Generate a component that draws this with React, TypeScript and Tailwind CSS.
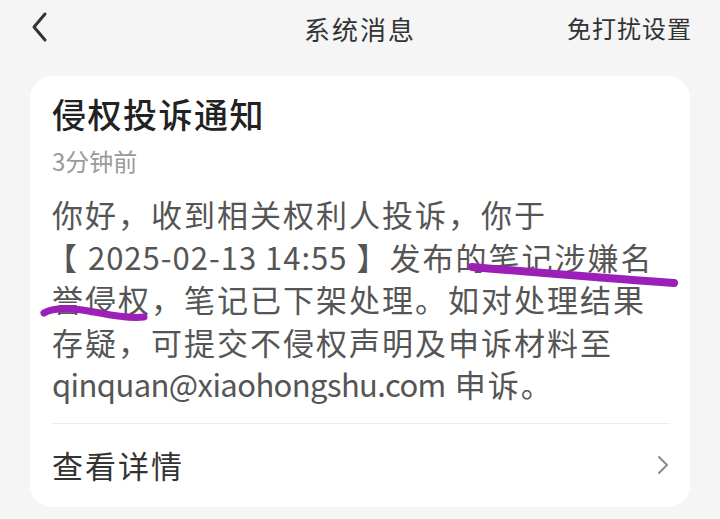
const cjk = { fontFamily: '"Noto Sans CJK SC", "Noto Sans", sans-serif' }

function BackIcon() {
  return (
    <svg width="24" height="34" viewBox="0 0 24 34" fill="none">
      <path d="M15 3 L4 16 L15 29" stroke="#333" strokeWidth="3" strokeLinecap="round" strokeLinejoin="round" />
    </svg>
  )
}

function ChevronRight() {
  return (
    <svg width="14" height="22" viewBox="0 0 14 22" fill="none">
      <path d="M3 3 L11 11 L3 19" stroke="#8a8a8a" strokeWidth="2" strokeLinecap="round" strokeLinejoin="round" />
    </svg>
  )
}

export default function App() {
  return (
    <div className="relative w-[720px] h-[519px] overflow-hidden bg-[#f5f5f5]" style={cjk}>
      {/* header */}
      <div className="relative flex h-[56px] items-center px-[30px]">
        <BackIcon />
        <div className="absolute left-0 right-0 top-0 flex h-[56px] items-center justify-center pointer-events-none">
          <span className="text-[26px] tracking-[2px] text-[#333]">系统消息</span>
        </div>
        <span className="ml-auto mr-[-2px] text-[24px] tracking-[1px] text-[#333]">免打扰设置</span>
      </div>

      {/* card */}
      <div className="mx-[30px] mt-[20px] rounded-[22px] bg-white pl-[22px] pr-[20px] pt-[16px]">
        <div className="text-[34px] leading-[44px] font-medium tracking-[1.5px] text-[#222]">侵权投诉通知</div>
        <div className="mt-[9px] text-[24px] leading-[32px] text-[#9a9a9a]">3分钟前</div>
        <div className="mt-[16px] text-[31px] leading-[42.5px] tracking-[2px] text-[#555] whitespace-nowrap">
          <div>你好，收到相关权利人投诉，你于</div>
          <div className="ml-[-6px]">
            【 <span className="tracking-[1px]">2025-02-13 14:55</span> 】发布的笔记涉嫌名
          </div>
          <div>誉侵权，笔记已下架处理。如对处理结果</div>
          <div>存疑，可提交不侵权声明及申诉材料至</div>
          <div>
            <span className="tracking-[-0.6px]">qinquan@xiaohongshu.com</span> 申诉。
          </div>
        </div>
        <div className="mt-[17px] h-px bg-[#ececec]" />
        <div className="flex h-[83px] items-center justify-between">
          <span className="text-[31px] tracking-[2px] text-[#333]">查看详情</span>
          <ChevronRight />
        </div>
      </div>

      {/* hand-drawn marks */}
      <svg className="pointer-events-none absolute left-0 top-0" width="720" height="519" viewBox="0 0 720 519" fill="none">
        <path d="M472 267 C 530 272, 600 278, 674 283" stroke="#9c1fb8" strokeWidth="8" strokeLinecap="round" />
        <path d="M44 313 C 55 306, 80 309, 100 313 S 135 318, 144 317" stroke="#9c1fb8" strokeWidth="7" strokeLinecap="round" />
      </svg>
    </div>
  )
}
